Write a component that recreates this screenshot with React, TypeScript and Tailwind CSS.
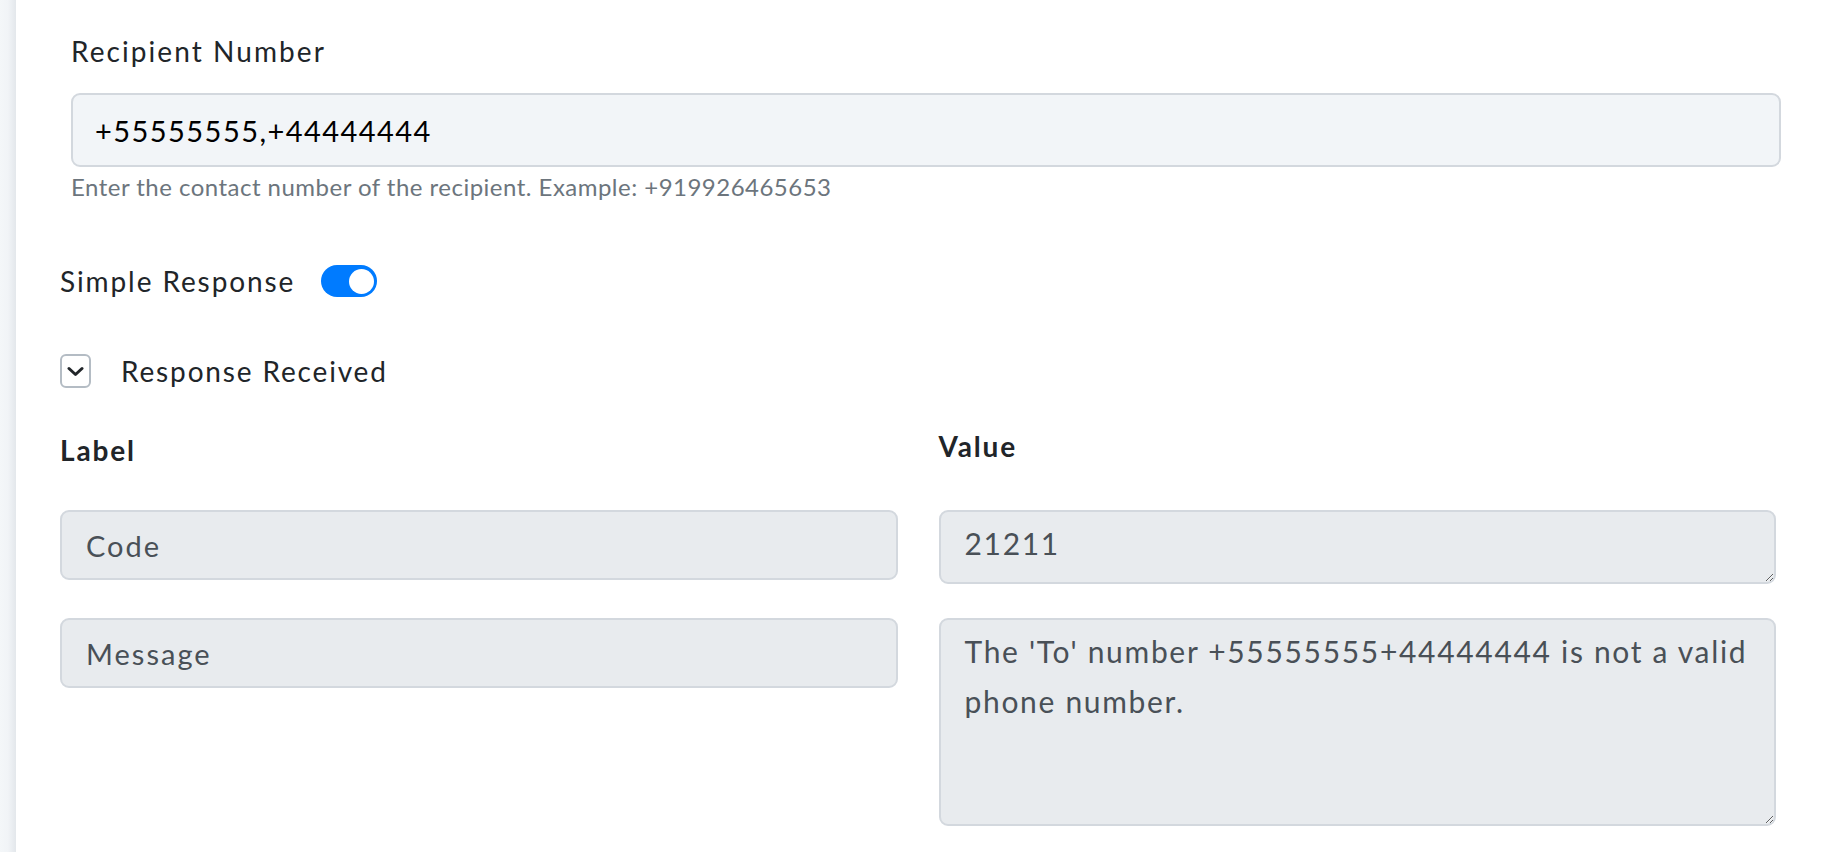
import React, { useState } from 'react'

const responseRows = [
  { label: 'Code', value: '21211' },
  { label: 'Message', value: "The 'To' number +55555555+44444444 is not a valid phone number." },
]

function Toggle({ on, onChange }: { on: boolean; onChange: (v: boolean) => void }) {
  return (
    <button
      type="button"
      role="switch"
      aria-checked={on}
      onClick={() => onChange(!on)}
      className={`relative flex h-[32px] w-[56px] shrink-0 items-center rounded-full px-[3px] transition-colors
                  ${on ? 'justify-end bg-[#007bff]' : 'justify-start bg-[#ced4da]'}`}
    >
      <span className="block h-[25px] w-[25px] rounded-full bg-white" />
    </button>
  )
}

export default function App() {
  const [simple, setSimple] = useState(true)
  const [open, setOpen] = useState(true)

  return (
    <div className="flex h-[852px] w-full overflow-hidden bg-white font-['Lato','Noto_Sans',sans-serif] tracking-[0.06em] text-[#212529]">
      <aside className="w-[16px] shrink-0 bg-linear-to-r from-[#f4f7f9] via-[#f1f4f7] to-[#e3e7eb]" />

      <main className="flex-1 pl-[44px] pr-[46px]">
        <div className="mr-[-5px] pl-[11px] pt-[31px]">
          <label className="block text-[28px] leading-[40px] tracking-[0.074em]">Recipient Number</label>
          <input
            defaultValue="+55555555,+44444444"
            className="mt-[22px] block h-[74px] w-full rounded-[9px] border-2 border-[#d3d8de] bg-[#f2f5f8] px-[22px] text-[29px] tracking-[0.05em] text-black outline-none"
          />
          <p className="mt-[2px] text-[24px] leading-[36px] tracking-[0.02em] text-[#6c757d]">
            Enter the contact number of the recipient. Example: +919926465653
          </p>
        </div>

        <div className="mt-[56px] flex items-center gap-[26px]">
          <span className="text-[28px] leading-[40px] tracking-[0.068em]">Simple Response</span>
          <Toggle on={simple} onChange={setSimple} />
        </div>

        <div className="mt-[50px] flex items-center gap-[30px]">
          <button
            type="button"
            onClick={() => setOpen(!open)}
            className="flex h-[34px] w-[31px] items-center justify-center rounded-[6px] border-2 border-[#b4bcc4] bg-white"
          >
            <svg width="17" height="11" viewBox="0 0 17 11" fill="none" stroke="#212529" strokeWidth="3" strokeLinecap="round" strokeLinejoin="round">
              <path d={open ? 'M2 2.5l6.5 6 6.5-6' : 'M2 8.5l6.5-6 6.5 6'} />
            </svg>
          </button>
          <span className="text-[28px] leading-[40px] tracking-[0.066em]">Response Received</span>
        </div>

        {open && (
          <div className="mt-[39px] grid grid-cols-2 gap-x-[41px]">
            <h4 className="text-[28px] font-bold leading-[40px] tracking-[0.066em]">Label</h4>
            <h4 className="-mt-[4px] text-[28px] font-bold leading-[40px] tracking-[0.066em]">Value</h4>

            {responseRows.map((row, i) => (
              <React.Fragment key={row.label}>
                <div className={i === 0 ? 'mt-[40px]' : 'mt-[34px]'}>
                  <input
                    readOnly
                    value={row.label}
                    className="block h-[70px] w-full rounded-[9px] border-2 border-[#d3d8de] bg-[#e8ebee] px-[24px] text-[29px] tracking-[0.07em] text-[#495057] outline-none"
                  />
                </div>
                <div className={i === 0 ? 'mt-[40px]' : 'mt-[34px]'}>
                  <textarea
                    readOnly
                    value={row.value}
                    className={`block w-full rounded-[9px] border-2 border-[#d3d8de] bg-[#e8ebee] px-[24px] py-[6px] text-[30px] leading-[50px] tracking-[0.056em] text-[#495057] outline-none
                                ${i === 0 ? 'h-[74px]' : 'h-[208px]'}`}
                  />
                </div>
              </React.Fragment>
            ))}
          </div>
        )}
      </main>
    </div>
  )
}
